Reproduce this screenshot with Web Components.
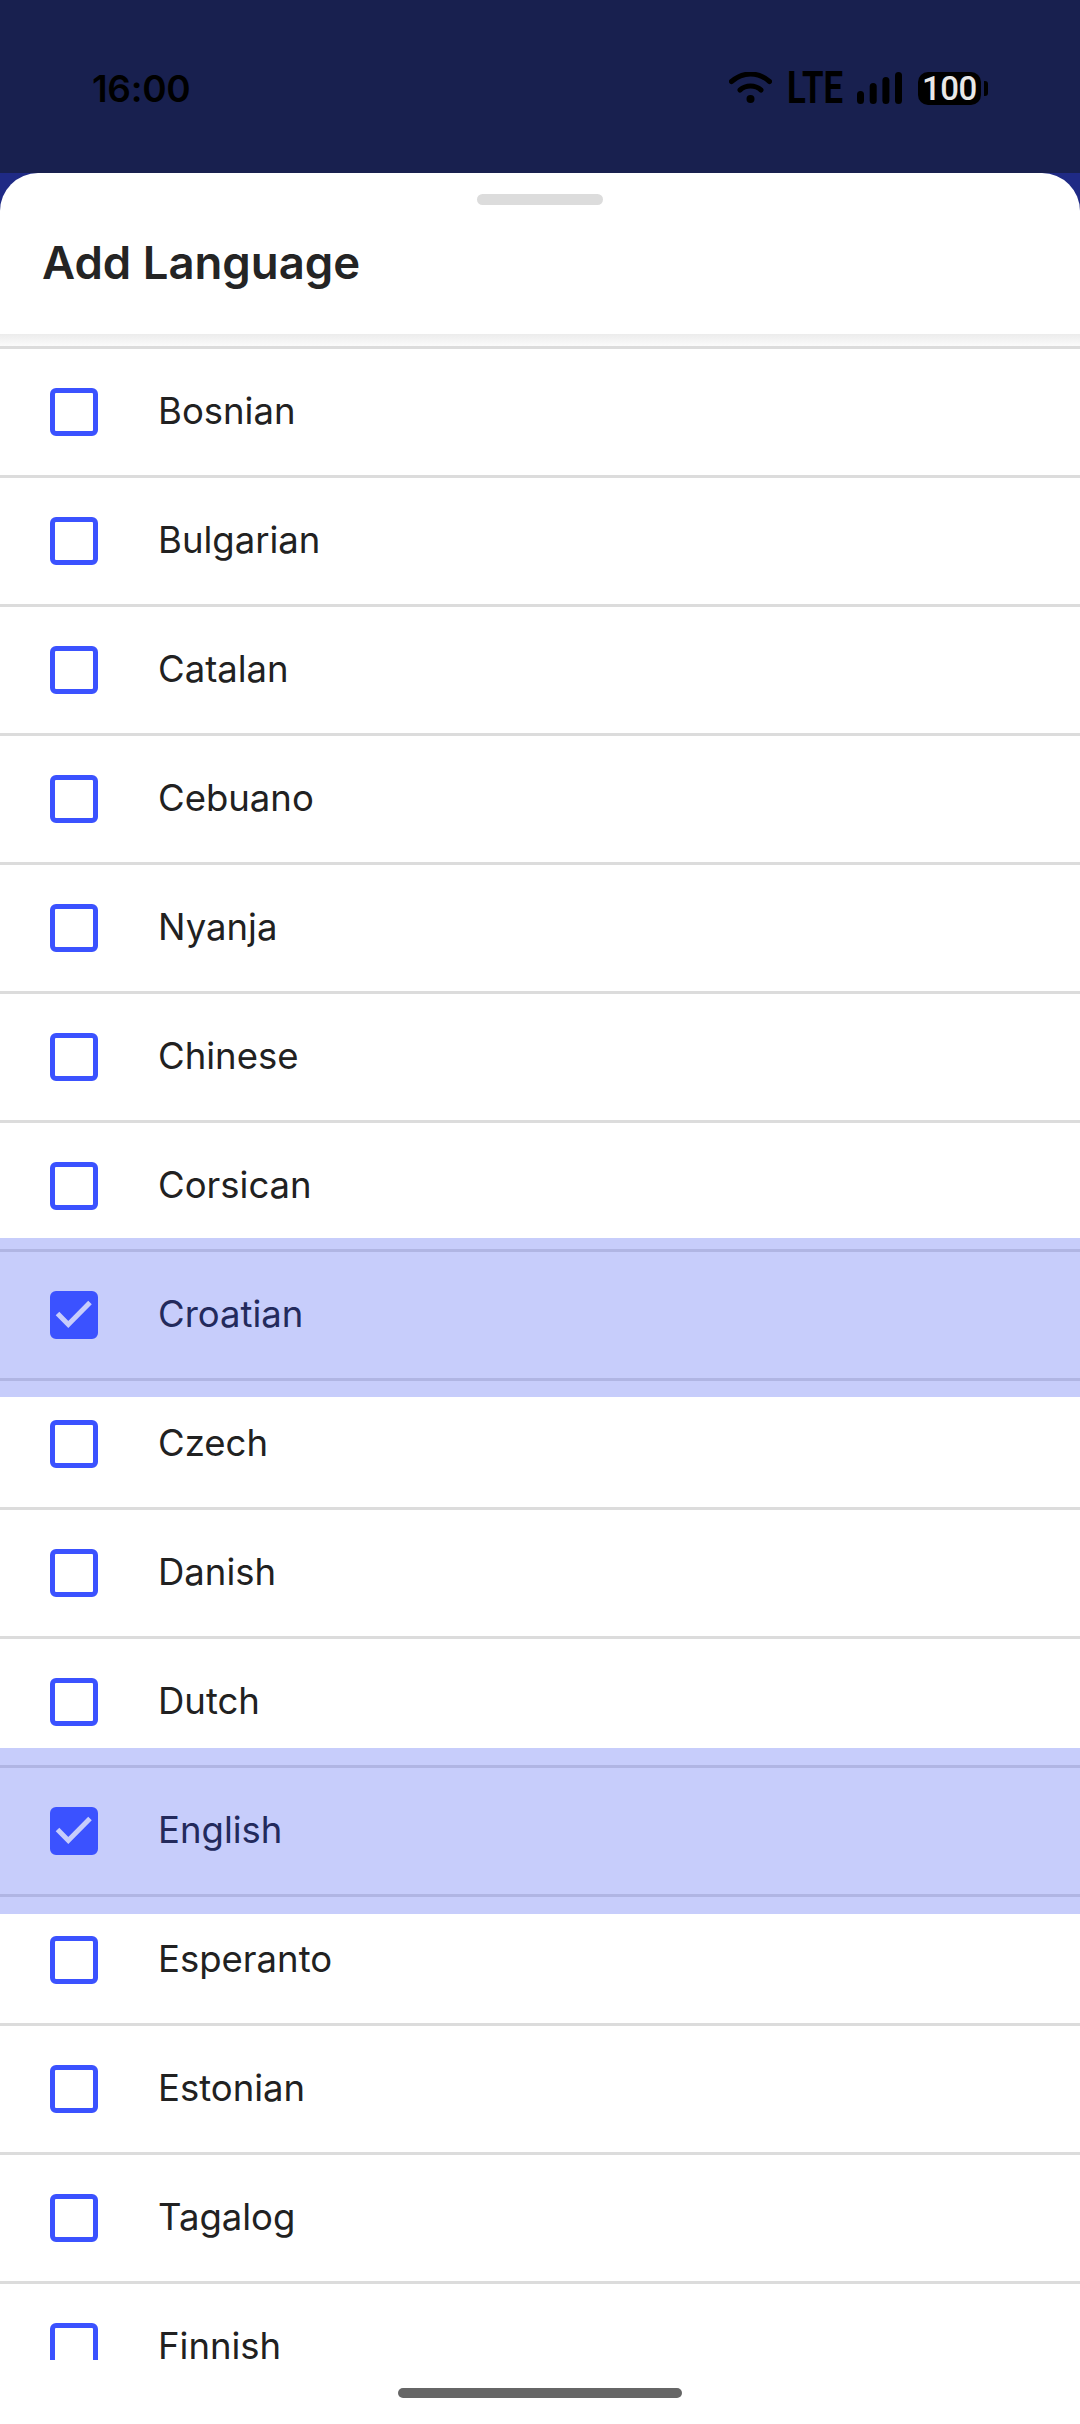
<!DOCTYPE html>
<html>
<head>
<meta charset="utf-8">
<style>
  html, body { margin: 0; padding: 0; }
  body { width: 1080px; height: 2424px; overflow: hidden; background: #1f2a85; font-family: Inter, "Liberation Sans", sans-serif; }
</style>
</head>
<body>
<status-bar></status-bar>
<bottom-sheet heading="Add Language">
  <language-row>Bosnian</language-row>
  <language-row>Bulgarian</language-row>
  <language-row>Catalan</language-row>
  <language-row>Cebuano</language-row>
  <language-row>Nyanja</language-row>
  <language-row>Chinese</language-row>
  <language-row>Corsican</language-row>
  <language-row selected style="--over-top: 11px; --over-bottom: 16px">Croatian</language-row>
  <language-row>Czech</language-row>
  <language-row>Danish</language-row>
  <language-row>Dutch</language-row>
  <language-row selected style="--over-top: 17px; --over-bottom: 17px">English</language-row>
  <language-row>Esperanto</language-row>
  <language-row>Estonian</language-row>
  <language-row>Tagalog</language-row>
  <language-row>Finnish</language-row>
</bottom-sheet>

<script>
class StatusBar extends HTMLElement {
  constructor() {
    super();
    this.attachShadow({ mode: 'open' });
    this.shadowRoot.innerHTML = `
      <style>
        :host { display: flex; align-items: center; height: 173px; box-sizing: border-box; padding: 0 92px; background: #18204f; color: #000; }
        .row { display: flex; align-items: center; width: 100%; height: 33px; margin-top: 3px; }
        .time { font: 600 37px Inter, sans-serif; letter-spacing: -0.3px; flex: 1; }
        .icons { display: flex; align-items: center; }
        svg { display: block; }
        .lte { display: block; width: 55px; margin-left: 15px; font: 700 44px/33px Roboto, sans-serif; transform: scaleX(.79); transform-origin: left center; white-space: nowrap; }
        .signal { margin-left: 15px; }
        .battery { display: flex; align-items: center; justify-content: center; width: 63px; height: 33px; margin-left: 16px; border-radius: 10px; background: #000; color: #e8e8e8; font: 500 33px/33px Roboto, sans-serif; letter-spacing: -0.5px; }
        .nub { width: 4px; height: 15px; margin-left: 3px; border-radius: 0 3px 3px 0; background: #000; }
      </style>
      <div class="row">
        <span class="time">16:00</span>
        <div class="icons">
          <svg width="43" height="32" viewBox="0 0 43 32" fill="none" stroke="#000" stroke-width="5" stroke-linecap="round">
            <path d="M2.5 9.5C14 -0.5 29 -0.5 40.5 9.5"/>
            <path d="M11 18C17 12.8 26 12.8 32 18"/>
            <circle cx="21.5" cy="27" r="4" fill="#000" stroke="none"/>
          </svg>
          <span class="lte">LTE</span>
          <svg class="signal" width="45" height="32" viewBox="0 0 45 32" fill="#000">
            <rect x="0" y="19" width="7" height="13" rx="3.5"/>
            <rect x="12.7" y="11" width="7" height="21" rx="3.5"/>
            <rect x="25.4" y="5" width="7" height="27" rx="3.5"/>
            <rect x="38" y="0" width="7" height="32" rx="3.5"/>
          </svg>
          <span class="battery">100</span>
          <span class="nub"></span>
        </div>
      </div>
    `;
  }
}

class BottomSheet extends HTMLElement {
  constructor() {
    super();
    this.attachShadow({ mode: 'open' });
    this.shadowRoot.innerHTML = `
      <style>
        :host { display: flex; flex-direction: column; height: 2251px; background: #fff; border-radius: 38px 38px 0 0; overflow: hidden; }
        .handle { width: 126px; height: 11px; margin: 21px auto 0; border-radius: 6px; background: #dcdcdc; flex: none; }
        h1 { margin: 0; padding: 27px 42px 0; height: 129px; box-sizing: border-box; font: 600 45.5px/62px Inter, sans-serif; color: #242424; flex: none; }
        .list { height: 2026px; box-sizing: border-box; padding-top: 12px; overflow: hidden; flex: none; position: relative; }
        .list::before { content: ""; position: absolute; left: 0; right: 0; top: 0; height: 12px; background: linear-gradient(#ececec, #fbfbfb); }
        .home { width: 284px; height: 10px; margin: 28px auto 0; border-radius: 5px; background: #666; flex: none; }
      </style>
      <div class="handle"></div>
      <h1></h1>
      <div class="list"><slot></slot></div>
      <div class="home"></div>
    `;
    this.shadowRoot.querySelector('h1').textContent = this.getAttribute('heading');
  }
}

class LanguageRow extends HTMLElement {
  constructor() {
    super();
    this.attachShadow({ mode: 'open' });
    const on = this.hasAttribute('selected');
    this.shadowRoot.innerHTML = `
      <style>
        :host { display: flex; align-items: center; height: 129px; box-sizing: border-box; padding-left: 50px; border-top: 3px solid #dcdcdc; color: #212121; font: 400 36.5px Inter, sans-serif; position: relative; }
        :host([selected]) { z-index: 1; color: #232a5c; border-top-color: transparent; }
        /* tint spills past the row, and hides the lines of its neighbours */
        :host([selected])::before { content: ""; position: absolute; z-index: -1; left: 0; right: 0; top: calc(-3px - var(--over-top)); bottom: calc(-3px - var(--over-bottom)); background: #c7cdfb; }
        .lines { position: absolute; z-index: -1; left: 0; right: 0; top: -3px; bottom: -3px; border: solid #b0b5e3; border-width: 3px 0; }
        .box { width: 48px; height: 48px; box-sizing: border-box; border: 5px solid #3b52ff; border-radius: 6px; flex: none; }
        .box.on { background: #3b52ff; }
        .box svg { display: block; margin: -5px; }
        .label { margin-left: 60px; margin-bottom: 3px; }
      </style>
      ${on ? '<span class="lines"></span>' : ''}
      <span class="box ${on ? 'on' : ''}">
        ${on ? `<svg width="48" height="48" viewBox="0 0 48 48" fill="none" stroke="#c7cdfb" stroke-width="5"><path d="M7.5 22.5L18.3 33.5L40 11.5"/></svg>` : ''}
      </span>
      <span class="label"><slot></slot></span>
    `;
  }
}

customElements.define('status-bar', StatusBar);
customElements.define('bottom-sheet', BottomSheet);
customElements.define('language-row', LanguageRow);
</script>
</body>
</html>
